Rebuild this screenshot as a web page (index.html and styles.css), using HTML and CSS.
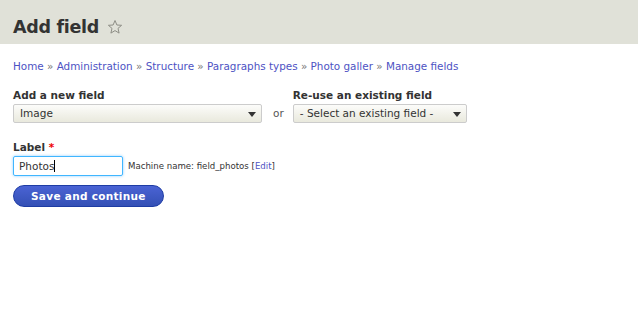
FILE: index.html
```html
<!DOCTYPE html>
<html lang="en">
<head>
  <meta charset="UTF-8" />
  <title>Add field</title>
  <link rel="stylesheet" href="styles.css">
</head>
<body>
  <div class="header">
    <h1 class="page-title">Add field</h1>
    <svg class="star" width="16" height="16" viewBox="0 0 16 16">
      <path d="M8 1.5 L9.9 6 L14.6 6.3 L11 9.4 L12.1 14.1 L8 11.6 L3.9 14.1 L5 9.4 L1.4 6.3 L6.1 6 Z" fill="none" stroke="#8e8e86" stroke-width="1"/>
    </svg>
  </div>

  <div class="content">
    <nav class="breadcrumb">
      <a href="#">Home</a> <span class="sep">»</span>
      <a href="#">Administration</a> <span class="sep">»</span>
      <a href="#">Structure</a> <span class="sep">»</span>
      <a href="#">Paragraphs types</a> <span class="sep">»</span>
      <a href="#">Photo galler</a> <span class="sep">»</span>
      <a href="#">Manage fields</a>
    </nav>

    <div class="field-row">
      <div class="form-item">
        <label>Add a new field</label>
        <div class="select wide">Image <span class="arrow"></span></div>
      </div>
      <div class="or">or</div>
      <div class="form-item">
        <label>Re-use an existing field</label>
        <div class="select">- Select an existing field - <span class="arrow"></span></div>
      </div>
    </div>

    <div class="form-item label-item">
      <label>Label <span class="req">*</span></label>
      <div class="label-row">
        <div class="text-input">Photos<span class="caret"></span></div>
        <span class="machine">Machine name: field_photos [<a href="#">Edit</a>]</span>
      </div>
    </div>

    <button class="button-primary">Save and continue</button>
  </div>
</body>
</html>
```

FILE: styles.css
```css
body {
  margin: 0;
  font-family: "DejaVu Sans", sans-serif;
  color: #333;
  background: #fff;
}

a {
  color: #4d52c3;
  text-decoration: none;
}

.header {
  background: #e0e1d8;
  height: 44px;
  padding: 0 13px;
  display: flex;
  align-items: center;
}

.page-title {
  margin: 0;
  margin-top: 9px;
  font-size: 17.5px;
  letter-spacing: -0.3px;
  font-weight: bold;
  color: #333;
}

.star {
  margin-left: 8px;
  margin-top: 10px;
}

.content {
  padding: 15px 13px;
}

.breadcrumb {
  font-size: 10.4px;
  line-height: 14px;
}

.breadcrumb .sep {
  color: #777;
}

.field-row {
  display: flex;
  align-items: flex-end;
  margin-top: 15px;
}

.form-item label {
  display: block;
  font-size: 10.5px;
  font-weight: bold;
  line-height: 14px;
  margin-bottom: 2px;
  color: #333;
}

.select {
  box-sizing: border-box;
  height: 19px;
  width: 174px;
  border: 1px solid #ccc;
  border-radius: 2px;
  background: linear-gradient(#fcfcfa, #e9e9dd);
  font-size: 10.5px;
  line-height: 17px;
  padding-left: 6px;
  position: relative;
  color: #333;
}

.select.wide {
  width: 249px;
}

.select .arrow {
  position: absolute;
  right: 5px;
  top: 7px;
  border-left: 4px solid transparent;
  border-right: 4px solid transparent;
  border-top: 5px solid #333;
}

.or {
  font-size: 10.5px;
  padding: 0 9px 4px 11px;
  color: #555;
}

.label-item {
  margin-top: 17px;
}

.req {
  color: #e00;
}

.label-row {
  display: flex;
  align-items: center;
}

.text-input {
  box-sizing: border-box;
  width: 110px;
  height: 20px;
  border: 1px solid #40b6ff;
  border-radius: 2px;
  box-shadow: 0 0 3px #8dcbff;
  font-size: 10.5px;
  line-height: 18px;
  padding-left: 5px;
  color: #333;
}

.caret {
  display: inline-block;
  width: 1px;
  height: 12px;
  background: #000;
  vertical-align: -2px;
}

.machine {
  font-size: 8.6px;
  margin-left: 5px;
  color: #333;
}

.button-primary {
  margin-top: 9px;
  height: 22px;
  padding: 0 17px;
  border: 1px solid #1e3ca4;
  border-radius: 12px;
  background: linear-gradient(#4a63d4, #3450b5);
  color: #fff;
  font-family: "DejaVu Sans", sans-serif;
  font-size: 10.5px;
  font-weight: bold;
  letter-spacing: 0.3px;
}
```
